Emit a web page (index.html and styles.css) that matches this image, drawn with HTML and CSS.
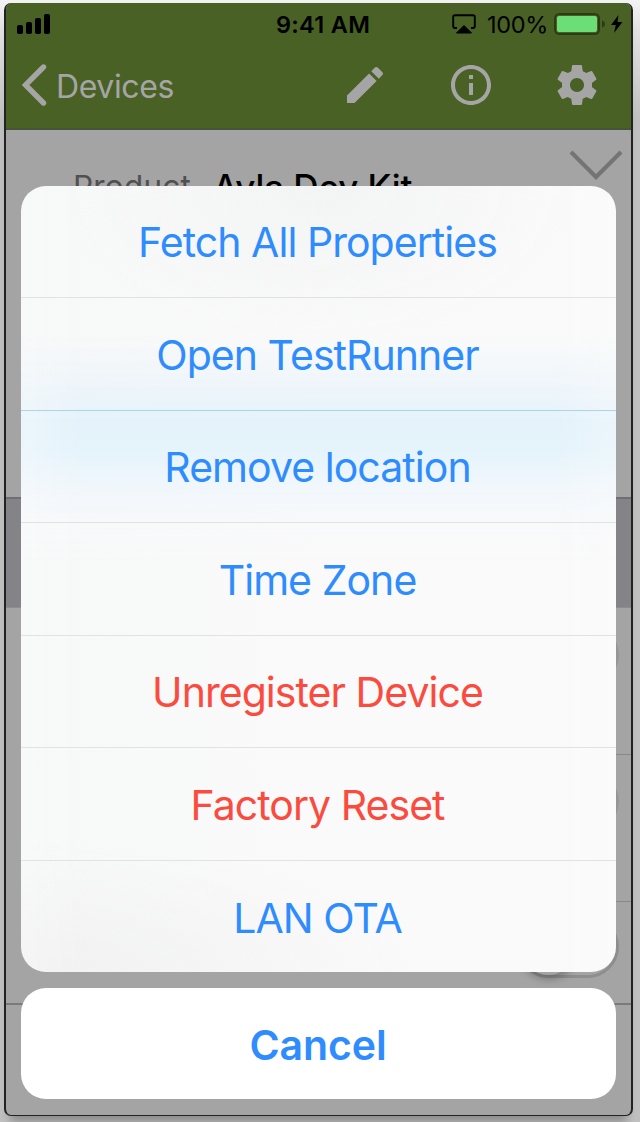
FILE: index.html
```html
<!DOCTYPE html>
<html lang="en">
<head>
<meta charset="utf-8">
<title>Device actions</title>
<link rel="stylesheet" href="styles.css">
</head>
<body>
<div class="phone">
  <header class="header">
    <div class="status">
      <svg class="signal" width="34" height="20" viewBox="0 0 34 20"><rect x="0" y="11" width="6" height="9" rx="1.8"/><rect x="9" y="8" width="6" height="12" rx="1.8"/><rect x="18" y="4" width="6" height="16" rx="1.8"/><rect x="27" y="0" width="6" height="20" rx="1.8"/></svg>
      <span class="time">9:41 AM</span>
      <div class="status-right">
        <svg class="airplay" width="24" height="20" viewBox="0 0 24 20"><path d="M5 14H3Q1.200 14 1.200 12V3Q1.200 1.200 3 1.200H21Q22.800 1.200 22.800 3V12Q22.800 14 21 14H19" fill="none" stroke="#000" stroke-width="1.900"/><path d="M12 11.500 19.500 19H4.500Z" stroke="#000" stroke-linejoin="round"/></svg>
        <span class="percent">100%</span>
        <svg class="battery" width="52" height="22" viewBox="0 0 52 22"><rect x="1" y="1" width="44" height="20" rx="4.500" fill="none" stroke="#2d3c15" stroke-width="2"/><rect x="3" y="3" width="40" height="16" rx="2" fill="#6bde76"/><path d="M48 7.500Q51 8.500 51 11T48 14.500Z" fill="#2d3c15"/></svg>
        <svg class="bolt" width="12" height="18" viewBox="0 0 12 18"><path d="M7.500 0 0 10H4.800L3 18 11.500 7H6.500Z"/></svg>
      </div>
    </div>
    <nav class="nav">
      <svg class="back" width="25" height="42" viewBox="0 0 25 42"><path d="M21.500 3 3.500 21 21.500 39" fill="none" stroke="currentColor" stroke-width="5.400" stroke-linecap="round" stroke-linejoin="miter"/></svg>
      <span class="nav-title">Devices</span>
      <div class="nav-icons">
        <svg width="48" height="48" viewBox="0 0 24 24"><path fill="currentColor" d="M3 17.250V21h3.750L17.810 9.940l-3.750-3.750L3 17.250zM20.710 7.040a1 1 0 0 0 0-1.410l-2.340-2.340a1 1 0 0 0-1.410 0l-1.830 1.830 3.750 3.750 1.830-1.830z"/></svg>
        <svg width="48" height="48" viewBox="0 0 24 24"><path fill="currentColor" d="M11 17h2v-6h-2v6zm1-15C6.480 2 2 6.480 2 12s4.480 10 10 10 10-4.480 10-10S17.520 2 12 2zm0 18c-4.410 0-8-3.590-8-8s3.590-8 8-8 8 3.590 8 8-3.590 8-8 8zM11 9h2V7h-2v2z"/></svg>
        <svg width="48" height="48" viewBox="0 0 24 24"><path fill="currentColor" d="M19.430 12.980c.04-.32.07-.64.07-.98s-.03-.66-.07-.98l2.110-1.650c.19-.15.24-.42.12-.64l-2-3.460c-.12-.22-.39-.3-.61-.22l-2.490 1c-.52-.4-1.080-.73-1.690-.98l-.38-2.650C14.460 2.180 14.250 2 14 2h-4c-.25 0-.46.18-.49.42l-.38 2.650c-.61.25-1.170.59-1.690.98l-2.490-1c-.23-.09-.49 0-.61.22l-2 3.460c-.13.22-.07.49.12.64l2.110 1.650c-.04.32-.07.65-.07.98s.03.66.07.98l-2.110 1.650c-.19.15-.24.42-.12.64l2 3.460c.12.22.39.3.61.22l2.490-1c.52.4 1.080.73 1.690.98l.38 2.650c.03.24.24.42.49.42h4c.25 0 .46-.18.49-.42l.38-2.650c.61-.25 1.170-.59 1.690-.98l2.490 1c.23.09.49 0 .61-.22l2-3.460c.12-.22.07-.49-.12-.64l-2.110-1.650zM12 15.500c-1.930 0-3.500-1.570-3.500-3.500s1.570-3.500 3.500-3.500 3.500 1.570 3.500 3.500-1.570 3.500-3.500 3.500z"/></svg>
      </div>
    </nav>
  </header>
  <section class="info">
    <span class="label">Product</span><span class="value">Ayla Dev Kit</span>
    <svg class="expand" width="54" height="32" viewBox="0 0 54 32"><path d="M2 2 27 27 52 2" fill="none" stroke="#747474" stroke-width="4.200"/></svg>
  </section>
  <div class="band"></div>
  <div class="row row-one"><i class="toggle"></i></div>
  <div class="row row-two"><i class="toggle"></i></div>
  <div class="row row-three"><i class="toggle toggle-off"><b class="knob"></b></i></div>

  <div class="overlay">
    <div class="sheet">
      <div class="action">Fetch All Properties</div>
      <div class="action tinted">Open TestRunner</div>
      <div class="action">Remove location</div>
      <div class="action">Time Zone</div>
      <div class="action danger">Unregister Device</div>
      <div class="action danger">Factory Reset</div>
      <div class="action">LAN OTA</div>
    </div>
    <div class="cancel">Cancel</div>
  </div>
</div>
</body>
</html>
```
FILE: styles.css
```css
* { box-sizing: border-box; }
body {
  margin: 0;
  height: 1122px;
  overflow: hidden;
  background: linear-gradient(#f3f3f3 0, #e2e2e2 30px, #c0c0c0 120px, #c0c0c0 100%);
  font-family: Inter, "Liberation Sans", sans-serif;
  display: flow-root;
}
svg { display: block; flex: none; }
.phone {
  position: relative;
  width: 629px;
  height: 1113px;
  margin: 3px 0 0 4px;
  border: solid #222;
  border-width: 0 2px 1px;
  border-radius: 7px;
  overflow: hidden;
  background: #a4a4a4;
  box-shadow: 0 12px 10px -6px rgba(0, 0, 0, .28);
}
.header {
  height: 127px;
  background: #496125;
  border-bottom: 2px solid #46543a;
  color: #a5a5a5;
}
.status {
  height: 42px;
  display: grid;
  grid-template-columns: 270px 176px 1fr;
  align-items: center;
  color: #000;
}
.signal { margin-left: 11px; }
.time { font-size: 23.500px; font-weight: 600; letter-spacing: .3px; white-space: nowrap; }
.status-right { display: flex; align-items: center; }
.percent { margin-left: 11px; width: 67px; font-size: 23.500px; letter-spacing: -.3px; white-space: nowrap; }
.battery { margin-right: 5px; }
.nav { display: flex; align-items: center; height: 80px; padding-left: 16px; }
.nav-title { margin-left: 9px; width: 285px; padding-top: 2px; font-size: 32px; letter-spacing: -.4px; }
.nav-icons { display: flex; gap: 58px; }
.info {
  height: 369px;
  display: flex;
  align-items: flex-start;
  padding: 20px 8px 0 67px;
  border-bottom: 2px solid #6f6f6f;
}
.label { width: 140px; padding-top: 19px; font-size: 31.500px; line-height: 36px; letter-spacing: .2px; color: #505050; }
.value { flex: 1; padding-top: 17px; font-size: 35px; font-weight: 500; line-height: 40px; letter-spacing: -.1px; color: #000; }
.band { height: 109px; background: #848388; border-bottom: 1px solid #8d8d8d; }
.row { display: flex; justify-content: flex-end; margin-left: 30px; padding-right: 12px; border-bottom: 1px solid #878787; }
.row-one { height: 147px; padding-top: 15px; }
.row-two { height: 147px; padding-top: 15px; }
.row-three { height: 103px; margin-left: 0; padding-top: 13px; border-bottom: 2px solid #777a7e; }
.toggle { width: 102px; height: 63px; border-radius: 32px; background: #969696; }
.toggle-off { background: #a4a4a4; border: 3px solid #8e8e8e; }
.knob { display: block; width: 57px; height: 57px; border-radius: 50%; background: #a4a4a4; box-shadow: 0 4px 8px rgba(0, 0, 0, .28); }
.overlay { position: absolute; inset: 182.500px 15px 15.500px; display: flex; flex-direction: column; gap: 16px; }
.sheet {
  height: 786.500px;
  border-radius: 25px;
  overflow: hidden;
  background:
    linear-gradient(90deg, rgba(250, 251, 252, .35) 0, transparent 60px, transparent 535px, rgba(250, 251, 252, .35) 100%),
    linear-gradient(transparent 150px, rgba(231, 243, 251, .75) 212px, #e4f2fb 235px, #e5f3fb 265px, rgba(241, 247, 252, .9) 305px, rgba(248, 249, 252, .6) 340px, transparent 375px),
    radial-gradient(ellipse 400px 130px at 0 100%, #f1f1f1, rgba(250, 250, 250, 0)),
    radial-gradient(ellipse 260px 160px at 50% 0, #f3f4f4, rgba(250, 250, 250, 0)),
    linear-gradient(90deg, #f7f8f8, #fafafa 50%);
}
.action {
  height: 112.500px;
  display: flex;
  justify-content: center;
  align-items: center;
  padding: 2px 2px 0 0;
  border-bottom: 1.500px solid #e0e2e4;
  color: #2e8cff;
  font-size: 41px;
  letter-spacing: -.95px;
  white-space: nowrap;
}
.action:last-child { border-bottom: 0; }
.action.tinted { border-color: #add5e7; }
.action.danger { color: #fb4b3e; }
.cancel {
  height: 111px;
  display: flex;
  justify-content: center;
  align-items: center;
  padding: 2px 1px 0 0;
  border-radius: 25px;
  background: #fff;
  color: #2e8cff;
  font-size: 41px;
  font-weight: 600;
  letter-spacing: -.1px;
}
```
